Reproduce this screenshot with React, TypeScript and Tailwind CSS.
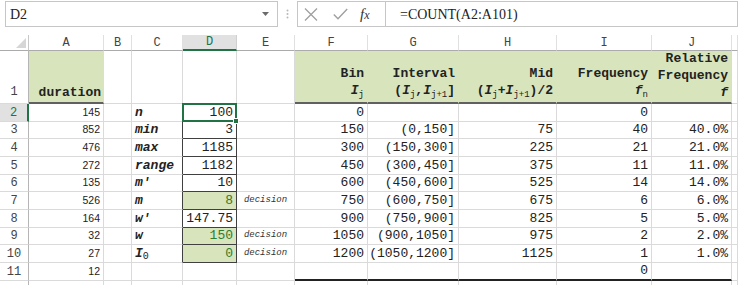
import React from 'react';

type Row = {
  n: number;
  a: string;
  c: React.ReactNode;
  d: string;
  e: string;
  f: string;
  g: string;
  h: string;
  i: string;
  j: string;
};

const sub = (t: string) => (
  <span className="relative top-[3px] text-[9px] font-normal not-italic">{t}</span>
);

const I = () => <span className="italic">I</span>;

const rows: Row[] = [
  { n: 2, a: '145', c: 'n', d: '100', e: '', f: '0', g: '', h: '', i: '0', j: '' },
  { n: 3, a: '852', c: 'min', d: '3', e: '', f: '150', g: '(0,150]', h: '75', i: '40', j: '40.0%' },
  { n: 4, a: '476', c: 'max', d: '1185', e: '', f: '300', g: '(150,300]', h: '225', i: '21', j: '21.0%' },
  { n: 5, a: '272', c: 'range', d: '1182', e: '', f: '450', g: '(300,450]', h: '375', i: '11', j: '11.0%' },
  { n: 6, a: '135', c: "m'", d: '10', e: '', f: '600', g: '(450,600]', h: '525', i: '14', j: '14.0%' },
  { n: 7, a: '526', c: 'm', d: '8', e: 'decision', f: '750', g: '(600,750]', h: '675', i: '6', j: '6.0%' },
  { n: 8, a: '164', c: "w'", d: '147.75', e: '', f: '900', g: '(750,900]', h: '825', i: '5', j: '5.0%' },
  { n: 9, a: '32', c: 'w', d: '150', e: 'decision', f: '1050', g: '(900,1050]', h: '975', i: '2', j: '2.0%' },
  {
    n: 10,
    a: '27',
    c: (
      <>
        I<span className="relative top-[3px] text-[10px] font-normal not-italic">0</span>
      </>
    ),
    d: '0',
    e: 'decision',
    f: '1200',
    g: '(1050,1200]',
    h: '1125',
    i: '1',
    j: '1.0%',
  },
  { n: 11, a: '12', c: '', d: '', e: '', f: '', g: '', h: '', i: '0', j: '' },
  { n: 12, a: '', c: '', d: '', e: '', f: '', g: '', h: '', i: '', j: '' },
];

const grid = 'border-r border-b border-r-[#dadada] border-b-[#dadada]';
const mono = "font-['Liberation_Mono',monospace]";

function Cell({
  className,
  children,
}: {
  className: string;
  children?: React.ReactNode;
}) {
  return (
    <div className={`relative flex items-center overflow-visible whitespace-nowrap ${className}`}>
      {children}
    </div>
  );
}

export default function App() {
  const letters = ['A', 'B', 'C', 'D', 'E', 'F', 'G', 'H', 'I', 'J', ''];
  return (
    <div className={`w-[738px] h-[285px] overflow-hidden bg-white text-[#222] ${mono}`}>
      {/* formula bar */}
      <div className="flex h-[35px] items-start pt-[1px] pl-[5px]">
        <div className="flex h-[26px] w-[273px] items-center justify-between border border-[#c6c6c6] pl-[4px] pr-[8px] font-['Liberation_Serif',serif] text-[14px] text-[#222]">
          <span>D2</span>
          <svg width="7" height="4" viewBox="0 0 7 4">
            <polygon points="0,0 7,0 3.5,4" fill="#6b6b6b" />
          </svg>
        </div>
        <div className="flex h-[26px] w-[19px] items-center justify-center">
          <svg width="3" height="10" viewBox="0 0 3 10">
            <circle cx="1.5" cy="1.5" r="1" fill="#b8b8b8" />
            <circle cx="1.5" cy="5" r="1" fill="#b8b8b8" />
            <circle cx="1.5" cy="8.5" r="1" fill="#b8b8b8" />
          </svg>
        </div>
        <div className="flex h-[26px] w-[88px] items-center border-y border-l border-[#c6c6c6]">
          <svg className="ml-[6px]" width="14" height="13" viewBox="0 0 14 13">
            <path d="M1 0.5 L13 12.5 M13 0.5 L1 12.5" stroke="#a0a0a0" strokeWidth="1.3" fill="none" />
          </svg>
          <svg className="ml-[15px]" width="15" height="12" viewBox="0 0 15 12">
            <path d="M0.8 6.5 L5 10.8 L14.2 1" stroke="#a0a0a0" strokeWidth="1.4" fill="none" />
          </svg>
          <span className="ml-[12px] font-['Liberation_Serif',serif] text-[15px] italic text-[#333]">
            f<span className="text-[12px]">x</span>
          </span>
        </div>
        <div className="flex h-[26px] flex-1 items-center border border-[#c6c6c6] pl-[14px] font-['Liberation_Serif',serif] text-[14px] text-[#222]">
          =COUNT(A2:A101)
        </div>
      </div>

      {/* grid */}
      <div className="grid grid-cols-[29px_75px_28px_51px_54px_58px_73px_91px_98px_95px_80px_1fr] grid-rows-[16px_53px_18px_17px_18px_18px_17px_18px_18px_17px_18px_18px_20px]">
        {/* column header row */}
        <div className="relative border-r border-b border-r-[#c8c8c8] border-b-[#ababab]">
          <svg className="absolute right-[2px] bottom-[2px]" width="10" height="10" viewBox="0 0 10 10">
            <polygon points="10,0 10,10 0,10" fill="#d6d6d6" />
          </svg>
        </div>
        {letters.map((l, idx) =>
          l === 'D' ? (
            <div
              key={idx}
              className="flex items-center justify-center border-r border-b-2 border-r-[#d0d0d0] border-b-[#217346] bg-[#e1e1e1] text-[12px] text-[#217346]"
            >
              {l}
            </div>
          ) : (
            <div
              key={idx}
              className="flex items-center justify-center border-r border-b border-r-[#e0e0e0] border-b-[#ababab] text-[12px] text-[#444]"
            >
              {l}
            </div>
          )
        )}

        {/* row 1 */}
        <div className="flex items-end justify-center border-r border-b border-r-[#b5b5b5] border-b-[#dadada] pb-[2px] text-[12px] text-[#444]">
          1
        </div>
        <Cell className="items-end justify-end border-r border-b-2 border-r-[#d8e4bc] border-b-[#606060] bg-[#d8e4bc] pr-[2px] pb-[1px] text-[13px] font-bold leading-[17px]">
          duration
        </Cell>
        <Cell className={grid} />
        <Cell className={grid} />
        <Cell className="border-r border-b border-r-[#dadada] border-b-[#404040]" />
        <Cell className={grid} />
        <div className="flex flex-col items-end justify-end border-r border-b-2 border-r-[#d8e4bc] border-b-[#606060] bg-[#d8e4bc] pr-[3px] pb-[1px] text-[13px] font-bold leading-[17px]">
          <span>Bin</span>
          <span>
            <I />
            {sub('j')}
          </span>
        </div>
        <div className="flex flex-col items-end justify-end border-r border-b-2 border-r-[#d8e4bc] border-b-[#606060] bg-[#d8e4bc] pr-[3px] pb-[1px] text-[13px] font-bold leading-[17px]">
          <span>Interval</span>
          <span>
            (<I />
            {sub('j')},<I />
            {sub('j+1')}]
          </span>
        </div>
        <div className="flex flex-col items-end justify-end border-r border-b-2 border-r-[#d8e4bc] border-b-[#606060] bg-[#d8e4bc] pr-[3px] pb-[1px] text-[13px] font-bold leading-[17px]">
          <span>Mid</span>
          <span>
            (<I />
            {sub('j')}+<I />
            {sub('j+1')})/2
          </span>
        </div>
        <div className="flex flex-col items-end justify-end border-r border-b-2 border-r-[#d8e4bc] border-b-[#606060] bg-[#d8e4bc] pr-[3px] pb-[1px] text-[13px] font-bold leading-[17px]">
          <span>Frequency</span>
          <span>
            <span className="italic">f</span>
            {sub('n')}
          </span>
        </div>
        <div className="flex flex-col items-end justify-end border-r border-b-2 border-r-[#dadada] border-b-[#606060] bg-[#d8e4bc] pr-[3px] pb-[1px] text-[13px] font-bold leading-[17px]">
          <span>Relative</span>
          <span>Frequency</span>
          <span className="italic">f</span>
        </div>
        <Cell className={grid} />

        {/* data rows */}
        {rows.map((r) => {
          const boxed = r.n >= 2 && r.n <= 10;
          const greenD = r.n === 7 || r.n === 9 || r.n === 10;
          const last = r.n === 11;
          return (
            <React.Fragment key={r.n}>
              {r.n === 2 ? (
                <div className="flex items-center justify-center border-r-2 border-b border-r-[#217346] border-b-[#dadada] bg-[#e1e1e1] text-[12px] text-[#217346]">
                  {r.n}
                </div>
              ) : (
                <div className="flex items-center justify-center border-r border-b border-r-[#b5b5b5] border-b-[#dadada] text-[12px] text-[#444]">
                  {r.n === 12 ? '' : r.n}
                </div>
              )}
              <Cell className={`${grid} justify-end pr-[3px] font-['Liberation_Sans',Arial,sans-serif] text-[10.5px]`}>
                {r.a}
              </Cell>
              <Cell className={grid} />
              {boxed ? (
                <Cell className="border-r border-b border-r-[#404040] border-b-[#dadada] pl-[3px] text-[13px] font-bold italic">
                  {r.c}
                </Cell>
              ) : (
                <Cell className={grid} />
              )}
              {boxed ? (
                greenD ? (
                  <Cell className="justify-end border-r border-b border-r-[#404040] border-b-[#404040] bg-[#d8e4bc] pr-[3px] text-[13px] text-[#2f7d2f]">
                    {r.d}
                  </Cell>
                ) : (
                  <Cell className="justify-end border-r border-b border-r-[#404040] border-b-[#404040] pr-[3px] text-[13px]">
                    {r.d}
                    {r.n === 2 && (
                      <div className="absolute left-[-1px] top-[-1px] right-[-1px] bottom-[-1px] z-10 border-2 border-[#217346]">
                        <div className="absolute right-[-4px] bottom-[-4px] h-[6px] w-[6px] border border-white bg-[#217346]" />
                      </div>
                    )}
                  </Cell>
                )
              ) : (
                <Cell className={grid} />
              )}
              <Cell className={`${grid} justify-center text-[9px] italic text-[#333]`}>{r.e}</Cell>
              {last ? (
                <>
                  <Cell className="border-r border-b-2 border-r-[#dadada] border-b-[#222]" />
                  <Cell className="border-r border-b-2 border-r-[#dadada] border-b-[#222]" />
                  <Cell className="border-r border-b-2 border-r-[#dadada] border-b-[#222]" />
                  <Cell className="justify-end border-r border-b-2 border-r-[#dadada] border-b-[#222] pr-[3px] text-[13px]">
                    {r.i}
                  </Cell>
                  <Cell className="border-r border-b-2 border-r-[#dadada] border-b-[#222]" />
                </>
              ) : (
                <>
                  <Cell className={`${grid} justify-end pr-[3px] text-[13px]`}>{r.f}</Cell>
                  <Cell className={`${grid} justify-end pr-[3px] text-[13px]`}>{r.g}</Cell>
                  <Cell className={`${grid} justify-end pr-[3px] text-[13px]`}>{r.h}</Cell>
                  <Cell className={`${grid} justify-end pr-[3px] text-[13px]`}>{r.i}</Cell>
                  <Cell className={`${grid} justify-end pr-[3px] text-[13px]`}>{r.j}</Cell>
                </>
              )}
              <Cell className={grid} />
            </React.Fragment>
          );
        })}
      </div>
    </div>
  );
}
